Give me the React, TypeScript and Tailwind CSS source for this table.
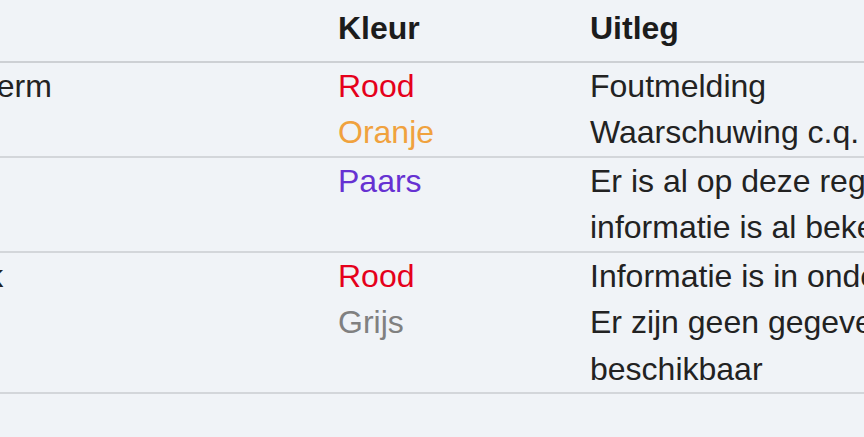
const rows = [
    {
        first: { text: 'Invoerscherm', shift: 'ml-[-142px]' },
        lines: [
            { kleur: 'Rood', color: 'text-[#e5001b]', uitleg: 'Foutmelding' },
            { kleur: 'Oranje', color: 'text-[#f0a23e]', uitleg: 'Waarschuwing c.q. aandachtspunt' },
        ],
    },
    {
        first: null,
        lines: [
            { kleur: 'Paars', color: 'text-[#6631d2]', uitleg: 'Er is al op deze registratie gereageerd,' },
            { kleur: '', color: '', uitleg: 'informatie is al bekend' },
        ],
    },
    {
        first: { text: 'Tabelblok', shift: 'ml-[-132px]' },
        lines: [
            { kleur: 'Rood', color: 'text-[#e5001b]', uitleg: 'Informatie is in onderzoek' },
            { kleur: 'Grijs', color: 'text-[#808080]', uitleg: 'Er zijn geen gegevens' },
            { kleur: '', color: '', uitleg: 'beschikbaar' },
        ],
    },
]

const App = () => {
    return (
        <div className="w-[864px] h-[437px] overflow-hidden bg-[#f0f3f7] text-[32px] leading-[46.5px] text-[#222222] font-['Liberation_Sans',Arial,sans-serif]">
            {/* header */}
            <div className="grid grid-cols-[338px_252px_1fr] pt-[5px] pb-[9px] border-b-2 border-[#cdd0d4] font-bold text-[#1c1c1c]">
                <div></div>
                <div>Kleur</div>
                <div className="whitespace-nowrap">Uitleg</div>
            </div>
            {rows.map((row, index) => (
                <div key={index} className="grid grid-cols-[338px_252px_1fr] border-b-2 border-[#d3d6da]">
                    <div className="overflow-hidden whitespace-nowrap">
                        {row.first && <span className={`block ${row.first.shift}`}>{row.first.text}</span>}
                    </div>
                    <div className="flex flex-col">
                        {row.lines.map((l, i) => (
                            <span key={i} className={`h-[46.5px] ${l.color}`}>{l.kleur}</span>
                        ))}
                    </div>
                    <div className="flex flex-col whitespace-nowrap">
                        {row.lines.map((l, i) => (
                            <span key={i} className="h-[46.5px]">{l.uitleg}</span>
                        ))}
                    </div>
                </div>
            ))}
        </div>
    )
}

export default App
